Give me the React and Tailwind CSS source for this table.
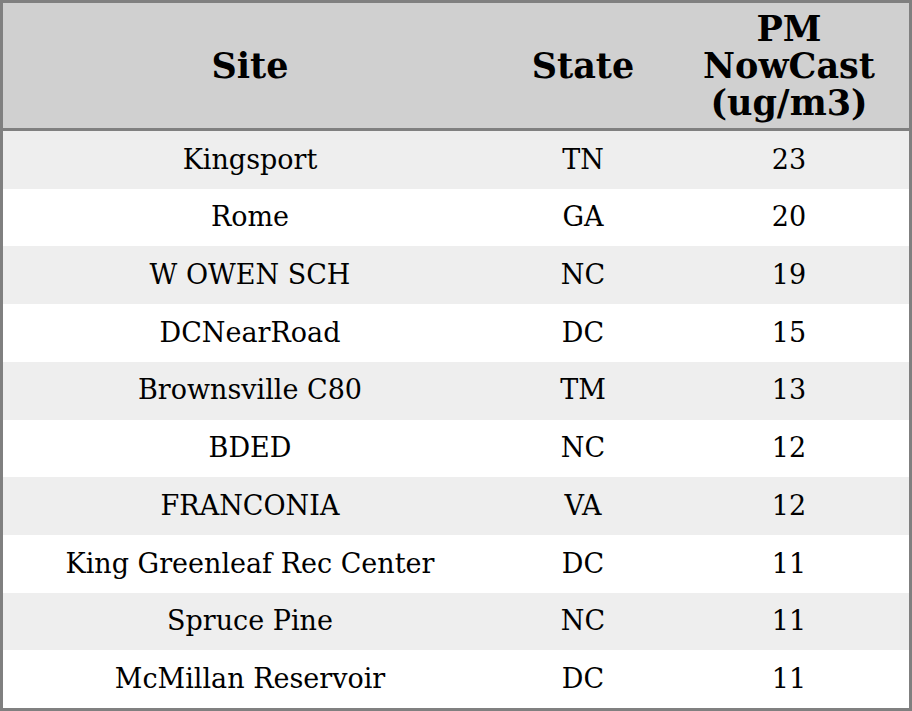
const rows = [
  { site: 'Kingsport', state: 'TN', pm: 23 },
  { site: 'Rome', state: 'GA', pm: 20 },
  { site: 'W OWEN SCH', state: 'NC', pm: 19 },
  { site: 'DCNearRoad', state: 'DC', pm: 15 },
  { site: 'Brownsville C80', state: 'TM', pm: 13 },
  { site: 'BDED', state: 'NC', pm: 12 },
  { site: 'FRANCONIA', state: 'VA', pm: 12 },
  { site: 'King Greenleaf Rec Center', state: 'DC', pm: 11 },
  { site: 'Spruce Pine', state: 'NC', pm: 11 },
  { site: 'McMillan Reservoir', state: 'DC', pm: 11 },
];

const cols = 'grid grid-cols-[494px_172px_240px]';

export default function App() {
  return (
    <div
      className="w-[912px] h-[711px] border-[3px] border-[#808080] bg-white text-black flex flex-col"
      style={{ fontFamily: '"DejaVu Serif", serif' }}
    >
      {/* Header */}
      <div className={`${cols} h-[128px] shrink-0 bg-[#d0d0d0] border-b-[3px] border-[#808080] text-[35px] leading-[37px] font-bold`}>
        <div className="flex items-center justify-center text-center">Site</div>
        <div className="flex items-center justify-center text-center">State</div>
        <div className="flex items-center justify-center text-center">
          PM<br />NowCast<br />(ug/m3)
        </div>
      </div>

      {/* Rows */}
      <div className="flex-1 flex flex-col">
        {rows.map((r, i) => (
          <div
            key={r.site}
            className={`${cols} flex-1 items-center text-center text-[27px] ${i % 2 === 0 ? 'bg-[#eeeeee]' : 'bg-white'}`}
          >
            <div>{r.site}</div>
            <div>{r.state}</div>
            <div>{r.pm}</div>
          </div>
        ))}
      </div>
    </div>
  );
}
